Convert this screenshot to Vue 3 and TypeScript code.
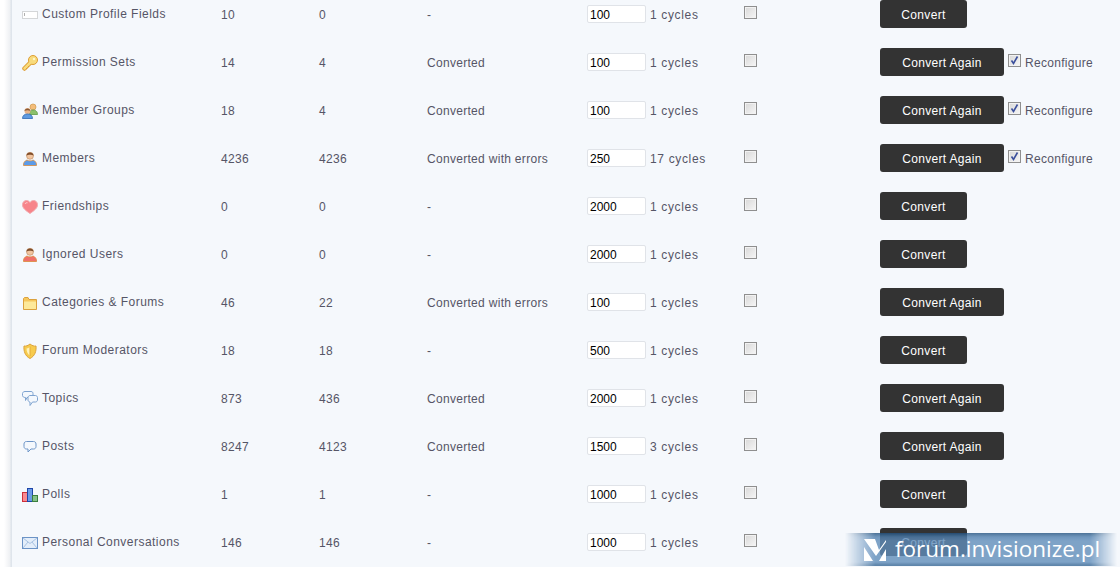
<script setup lang="ts">
type Row = {
  icon: string;
  label: string;
  total: number;
  done: number;
  status: string;
  perCycle: number;
  cycles: number;
  action: string;
  reconfigure?: boolean;
};

const rows: Row[] = [
  { icon: 'field', label: 'Custom Profile Fields', total: 10, done: 0, status: '-', perCycle: 100, cycles: 1, action: 'Convert' },
  { icon: 'key', label: 'Permission Sets', total: 14, done: 4, status: 'Converted', perCycle: 100, cycles: 1, action: 'Convert Again', reconfigure: true },
  { icon: 'group', label: 'Member Groups', total: 18, done: 4, status: 'Converted', perCycle: 100, cycles: 1, action: 'Convert Again', reconfigure: true },
  { icon: 'user', label: 'Members', total: 4236, done: 4236, status: 'Converted with errors', perCycle: 250, cycles: 17, action: 'Convert Again', reconfigure: true },
  { icon: 'heart', label: 'Friendships', total: 0, done: 0, status: '-', perCycle: 2000, cycles: 1, action: 'Convert' },
  { icon: 'ignored', label: 'Ignored Users', total: 0, done: 0, status: '-', perCycle: 2000, cycles: 1, action: 'Convert' },
  { icon: 'folder', label: 'Categories & Forums', total: 46, done: 22, status: 'Converted with errors', perCycle: 100, cycles: 1, action: 'Convert Again' },
  { icon: 'shield', label: 'Forum Moderators', total: 18, done: 18, status: '-', perCycle: 500, cycles: 1, action: 'Convert' },
  { icon: 'topics', label: 'Topics', total: 873, done: 436, status: 'Converted', perCycle: 2000, cycles: 1, action: 'Convert Again' },
  { icon: 'post', label: 'Posts', total: 8247, done: 4123, status: 'Converted', perCycle: 1500, cycles: 3, action: 'Convert Again' },
  { icon: 'polls', label: 'Polls', total: 1, done: 1, status: '-', perCycle: 1000, cycles: 1, action: 'Convert' },
  { icon: 'mail', label: 'Personal Conversations', total: 146, done: 146, status: '-', perCycle: 1000, cycles: 1, action: 'Convert' },
];
</script>

<template>
  <div class="page">
    <div class="table">
      <div v-for="row in rows" :key="row.label" class="row">
        <div class="name">
          <svg class="icon" viewBox="0 0 16 16" width="16" height="16">
            <template v-if="row.icon === 'field'">
              <rect x="0.5" y="4.5" width="15" height="7" fill="#fff" stroke="#d4d6d8" />
              <path d="M2.5 6v3" stroke="#b0b0b0" />
            </template>
            <template v-else-if="row.icon === 'key'">
              <path d="M2.500 13.500L10 6" stroke="#dd9d32" stroke-width="4.500" stroke-linecap="round" />
              <circle cx="11" cy="5" r="4.500" fill="#f8db7c" stroke="#dd9d32" />
              <path d="M2.500 13.500L10 6" stroke="#f8db7c" stroke-width="2.500" stroke-linecap="round" />
              <path d="M4 14l1.500-1.500M6 12l1-1" stroke="#dd9d32" />
              <circle cx="12" cy="4" r="1.200" fill="#fff6c8" />
            </template>
            <template v-else-if="row.icon === 'group'">
              <circle cx="11" cy="4" r="3" fill="#f4bd7a" stroke="#cf9a4c" stroke-width=".7" />
              <path d="M7.500 11.500c0-3 1.500-4.500 3.500-4.500s4.500 1 4.500 4.500z" fill="#8cc06a" stroke="#5e9a45" stroke-width=".8" />
              <circle cx="5.500" cy="8" r="3" fill="#eab489" />
              <path d="M2.500 8c0-3.500 6-3.500 6 0-1.500-1-4.500-1-6 0z" fill="#8a5a35" />
              <path d="M.5 15.500c0-3 2-4.500 5-4.500s5 1.500 5 4.500z" fill="#5e9ae0" stroke="#2e68b2" stroke-width=".8" />
            </template>
            <template v-else-if="row.icon === 'user' || row.icon === 'ignored'">
              <circle cx="8" cy="4.800" r="3.500" fill="#f2c5a0" stroke="#b98557" stroke-width=".6" />
              <path d="M4.500 4.800C4.500.5 11.500.5 11.500 4.800 10 3.500 6 3.500 4.500 4.800z" fill="#7f4d2a" />
              <path
                d="M1.500 14.500c-.3-2.500 1-4.500 3.500-5.500 1.500 1.200 4.500 1.200 6 0 2.500 1 3.800 3 3.500 5.500z"
                :fill="row.icon === 'user' ? '#5c9be8' : '#f0706a'"
                stroke="#d98a3a"
                stroke-width=".8"
              />
            </template>
            <template v-else-if="row.icon === 'heart'">
              <path d="M8 14.500C3 11 .5 9 .5 5.700.5 3 2.500 1.500 4.500 1.500 6 1.500 7.200 2.300 8 3.500c.8-1.200 2-2 3.500-2 2 0 4 1.500 4 4.200C15.500 9 13 11 8 14.500z" fill="#f7848a" stroke="#f2a8ac" />
              <path d="M3 5c.5-1 1.500-1.500 2.500-1.200" stroke="#ffd4d6" fill="none" />
            </template>
            <template v-else-if="row.icon === 'folder'">
              <path d="M1.500 3.500V14.500h13V4.500H7L6 2.500H2.500z" fill="#f6c75c" stroke="#dba13e" />
              <path d="M2 6.500h12v7.500H2z" fill="#fde99a" />
            </template>
            <template v-else-if="row.icon === 'shield'">
              <path d="M2 3c2 .5 4-.5 6-2 2 1.500 4 2.500 6 2 .5 5-1 10-6 12.500C3 13 1.500 8 2 3z" fill="#f7cb4d" stroke="#dca33c" />
              <path d="M8 3.500v9.500C5.500 11 4.500 8 4.500 5.500 6 5.500 7 4.500 8 3.500z" fill="#fff3ba" />
              <path d="M8 3.500v9.500" stroke="#e6ac38" />
            </template>
            <template v-else-if="row.icon === 'topics'">
              <path d="M3 .5h6c1.500 0 2 1 2 2v2c0 1-1 2-2 2H5L3.500 9.500V6.500C1.500 6.500.5 5.500.5 4.500v-2c0-1 1-2 2.500-2z" fill="#f4f8fd" stroke="#7ea3d0" />
              <path d="M8 4.500h5.500c1 0 2 1 2 2v2.500c0 1-1 2-2 2h-3L8 14.500V11C7 11 6 10 6 9V6.500c0-1 1-2 2-2z" fill="#f4f8fd" stroke="#7ea3d0" />
            </template>
            <template v-else-if="row.icon === 'post'">
              <path d="M4.500 2.500h7c1.500 0 2.500 1 2.500 2.500v2.500c0 1.500-1 2.500-2.500 2.500H9l-3 3v-3H4.500C3 10 2 9 2 7.500V5c0-1.500 1-2.500 2.500-2.500z" fill="#f4f8fd" stroke="#6d95c8" />
            </template>
            <template v-else-if="row.icon === 'polls'">
              <rect x="0.500" y="5.500" width="5" height="9" fill="#f98a90" stroke="#cc2f3a" />
              <rect x="5.500" y="1.500" width="5" height="13" fill="#6b9ae6" stroke="#1d45a8" />
              <rect x="10.500" y="8.500" width="5" height="6" fill="#86c188" stroke="#3a7f3e" />
            </template>
            <template v-else-if="row.icon === 'mail'">
              <rect x="0.500" y="2.500" width="15" height="11" fill="#e4eefa" stroke="#6b93c6" />
              <path d="M1 3l7 5.500L15 3M1 13l5-6M15 13l-5-6" fill="none" stroke="#a9c3e2" />
            </template>
          </svg>
          <span class="label">{{ row.label }}</span>
        </div>
        <div class="text">{{ row.total }}</div>
        <div class="text">{{ row.done }}</div>
        <div class="text">{{ row.status }}</div>
        <div class="per-cycle">
          <input class="amount" type="text" :value="row.perCycle" />
          <span class="cycles">{{ row.cycles }} cycles</span>
        </div>
        <div class="check-cell"><span class="check"></span></div>
        <div class="actions">
          <button class="btn" :class="{ again: row.action === 'Convert Again' }">{{ row.action }}</button>
          <template v-if="row.reconfigure">
            <span class="check checked">
              <svg viewBox="0 0 11 11" width="11" height="11">
                <path d="M2.500 5.500l2 3 4-7" fill="none" stroke="#3b4f9c" stroke-width="1.600" />
              </svg>
            </span>
            <span class="reconfigure">Reconfigure</span>
          </template>
        </div>
      </div>
    </div>

    <div class="watermark">
      <div class="band"></div>
      <svg class="mark" viewBox="0 0 22 22" width="22" height="22">
        <path d="M0 0H11L15 11 22 1V3L12 17z" fill="#fff" />
        <path d="M0 8L9 22H0zM22 10V22H15z" fill="#fff" />
      </svg>
      <span class="wm-text">forum.invisionize.pl</span>
    </div>
  </div>
</template>

<style scoped>
.page {
  position: relative;
  width: 1120px;
  height: 567px;
  overflow: hidden;
  box-sizing: border-box;
  padding-left: 22px;
  background: linear-gradient(90deg, #ffffff 0, #ffffff 4px, #eef0f3 10px, #dfe5ec 11px, #dfe5ec 12px, #f5f8fc 12px);
  font-family: "Liberation Sans", Arial, sans-serif;
  font-size: 12px;
  letter-spacing: 0.3px;
  color: #555566;
}
.table {
  margin-top: -10px;
}
.row {
  display: grid;
  grid-template-columns: 199px 98px 108px 160px 157px 136px 1fr;
  align-items: center;
  height: 48px;
}
.name {
  display: flex;
  align-items: center;
  gap: 4px;
}
.icon {
  flex: none;
  margin-top: 2px;
}
.label {
  letter-spacing: 0.47px;
}
.text {
  padding-top: 2px;
}
.per-cycle {
  display: flex;
  align-items: center;
  gap: 4px;
}
.cycles {
  padding-top: 2px;
  letter-spacing: 0.65px;
}
.amount {
  box-sizing: border-box;
  width: 59px;
  height: 18px;
  padding: 1px 2px 0;
  border: 1px solid #e0e3e8;
  border-radius: 2px;
  background: #fff;
  font: 12px "Liberation Sans", Arial, sans-serif;
  color: #000;
  outline: none;
}
.check-cell {
  display: flex;
  align-items: center;
}
.check {
  display: inline-flex;
  box-sizing: border-box;
  width: 13px;
  height: 13px;
  margin-top: -4px;
  border: 1px solid #8f8f8f;
  background: linear-gradient(135deg, #d8d8d8, #f6f6f6);
  box-shadow: inset 0 0 0 1px #f2f2f2;
}
.checked {
  margin-left: 4px;
}
.actions {
  display: flex;
  align-items: center;
}
.btn {
  width: 87px;
  height: 28px;
  padding: 1px 0 0;
  border: 0;
  border-radius: 3px;
  background: #333333;
  color: #ffffff;
  font: 12px "Liberation Sans", Arial, sans-serif;
  letter-spacing: 0.33px;
}
.btn.again {
  width: 124px;
}
.reconfigure {
  margin-left: 4px;
  padding-top: 2px;
}
.watermark {
  position: absolute;
  right: 0;
  bottom: 1px;
  display: flex;
  align-items: center;
  width: 275px;
  height: 33px;
  padding-left: 19px;
  box-sizing: border-box;
}
.band {
  position: absolute;
  inset: 0 3px 0 0;
  background: linear-gradient(180deg, #235280 0, #4f7fae 4px, #618ebb 8px, #618ebb 29px, #3a6a98 32px);
  opacity: 0.8;
  -webkit-mask-image: linear-gradient(90deg, transparent 0, #000 30px, #000 245px, transparent 100%);
  mask-image: linear-gradient(90deg, transparent 0, #000 30px, #000 245px, transparent 100%);
}
.mark {
  position: relative;
  flex: none;
}
.wm-text {
  position: relative;
  margin-left: 9px;
  font-family: "Open Sans", sans-serif;
  font-size: 22.5px;
  letter-spacing: 0;
  color: #ffffff;
  line-height: 1;
}
</style>
